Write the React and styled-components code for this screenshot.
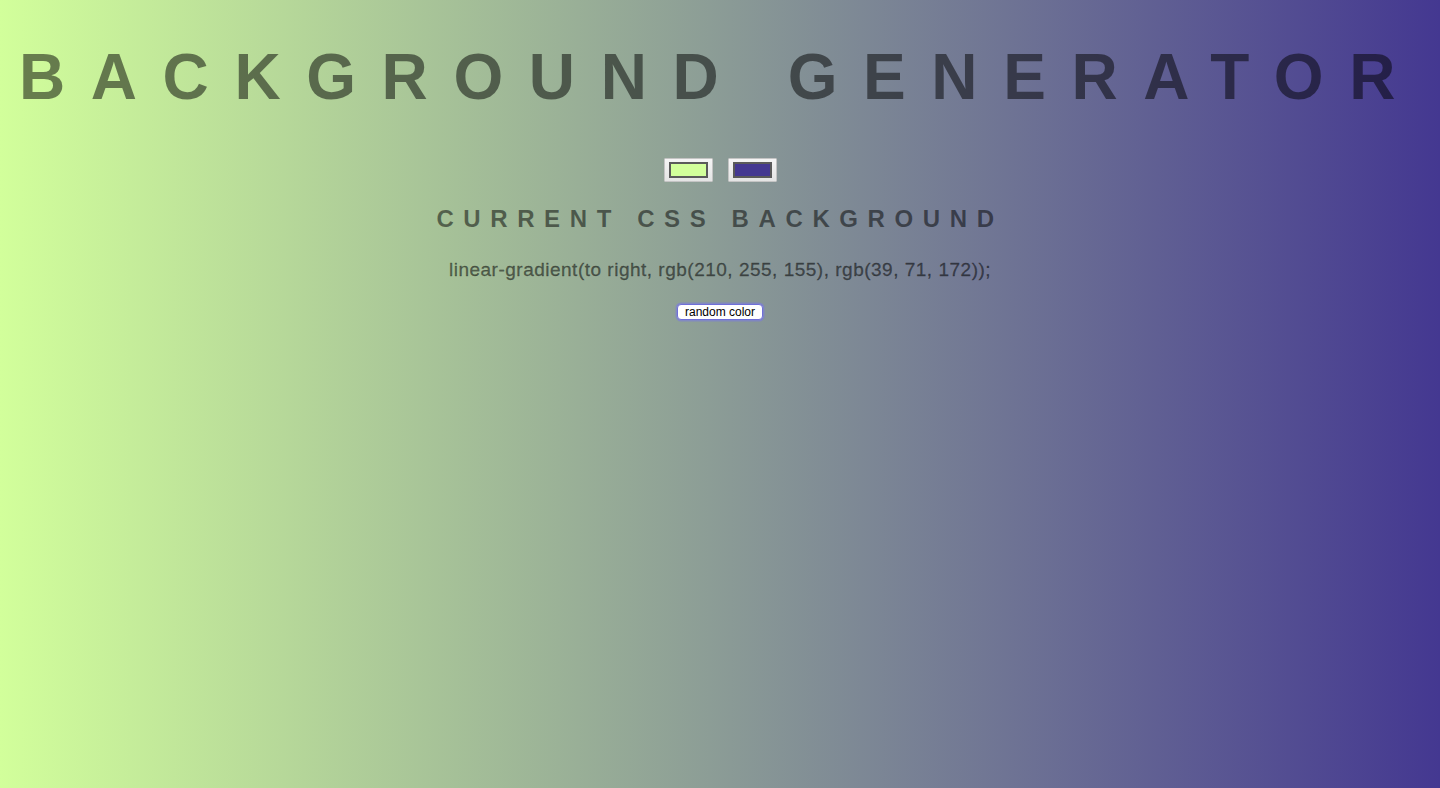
import React, { useState } from "react";
import styled, { createGlobalStyle } from "styled-components";

const GlobalStyle = createGlobalStyle`
  html, body { margin: 0; padding: 0; }
  body { font-family: "Liberation Sans", Arial, sans-serif; }
`;

const Page = styled.div`
  min-height: 788px;
  height: 100vh;
  box-sizing: border-box;
  padding-top: 41px;
  text-align: center;
  color: rgba(0, 0, 0, 0.5);
  background: linear-gradient(to right, ${(p) => p.$from}, ${(p) => p.$to});
  display: flex;
  flex-direction: column;
  align-items: center;
`;

const Title = styled.h1`
  margin: 0;
  font-size: 64px;
  line-height: 72px;
  font-weight: bold;
  letter-spacing: 25.6px;
  white-space: nowrap;
`;

const Pickers = styled.div`
  display: flex;
  gap: 15px;
  margin-top: 45px;
`;

const ColorInput = styled.input`
  -webkit-appearance: none;
  appearance: none;
  width: 49px;
  height: 24px;
  box-sizing: border-box;
  margin: 0;
  padding: 0;
  border: 1px solid #c4c4c4;
  border-radius: 1px;
  background: linear-gradient(#f4f4f4, #e4e4e4);
  cursor: pointer;

  &::-webkit-color-swatch-wrapper {
    padding: 3px 4px;
  }
  &::-webkit-color-swatch {
    border: 2px solid #5a5a5a;
    border-radius: 0;
  }
`;

const Subtitle = styled.h3`
  margin: 21px 0 0;
  font-size: 24px;
  line-height: 32px;
  font-weight: bold;
  letter-spacing: 9.6px;
  white-space: nowrap;
`;

const CssText = styled.p`
  margin: 23px 0 0;
  font-size: 19px;
  line-height: 24px;
  letter-spacing: 0.5px;
  -webkit-text-stroke: 0.3px rgba(0, 0, 0, 0.5);
  white-space: nowrap;
`;

const RandomButton = styled.button`
  margin-top: 22px;
  font-family: "Liberation Sans", Arial, sans-serif;
  font-size: 12px;
  line-height: 14px;
  color: #000;
  background: #fff;
  border: 1px solid #6f6fd8;
  box-shadow: 0 0 0 1.5px rgba(120, 120, 230, 0.55);
  border-radius: 4px;
  padding: 0 7px;
  height: 16px;
  cursor: pointer;
`;

const rgbString = (hex) => {
  const n = parseInt(hex.slice(1), 16);
  return `rgb(${(n >> 16) & 255}, ${(n >> 8) & 255}, ${n & 255})`;
};

const randomHex = () =>
  "#" + Math.floor(Math.random() * 0xffffff).toString(16).padStart(6, "0");

export default function App() {
  const [c1, setC1] = useState("#d2ff9b");
  const [c2, setC2] = useState("#443891");
  const [label, setLabel] = useState(
    "linear-gradient(to right, rgb(210, 255, 155), rgb(39, 71, 172));"
  );

  const update = (a, b) => {
    setLabel(`linear-gradient(to right, ${rgbString(a)}, ${rgbString(b)});`);
  };

  return (
    <>
      <GlobalStyle />
      <Page $from={c1} $to={c2}>
        <Title>BACKGROUND GENERATOR</Title>
        <Pickers>
          <ColorInput
            type="color"
            value={c1}
            onChange={(e) => {
              setC1(e.target.value);
              update(e.target.value, c2);
            }}
          />
          <ColorInput
            type="color"
            value={c2}
            onChange={(e) => {
              setC2(e.target.value);
              update(c1, e.target.value);
            }}
          />
        </Pickers>
        <Subtitle>CURRENT CSS BACKGROUND</Subtitle>
        <CssText>{label}</CssText>
        <RandomButton
          onClick={() => {
            const a = randomHex();
            const b = randomHex();
            setC1(a);
            setC2(b);
            update(a, b);
          }}
        >
          random color
        </RandomButton>
      </Page>
    </>
  );
}
